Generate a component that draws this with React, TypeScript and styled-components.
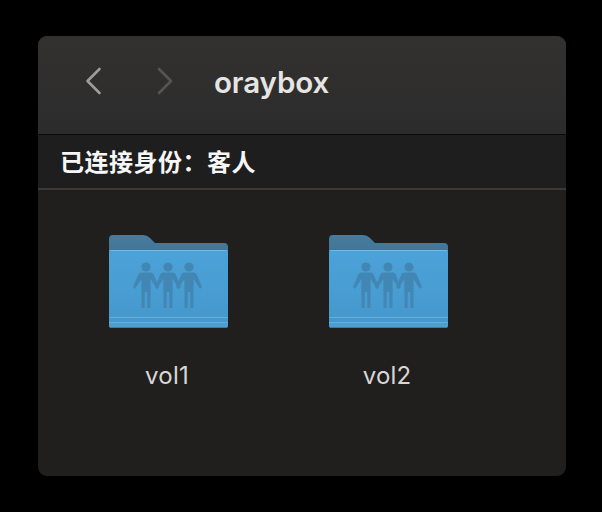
import React from "react";
import styled, { createGlobalStyle } from "styled-components";

const Global = createGlobalStyle`
  html, body { margin: 0; padding: 0; background: #000; }
  body { width: 602px; height: 512px; overflow: hidden; font-family: Inter, "Noto Sans CJK SC", sans-serif; }
`;
const Stage = styled.div`
  width: 602px; height: 512px; padding: 36px 36px 36px 38px; box-sizing: border-box;
`;
const Window = styled.div`
  width: 528px; height: 440px; border-radius: 9px; overflow: hidden;
  background: #211e1e; display: flex; flex-direction: column;
`;
const Toolbar = styled.div`
  height: 99px; flex: none; box-sizing: border-box; background: linear-gradient(#323130, #2d2c2c);
  border-bottom: 1px solid #0b0b0b; display: flex; align-items: center; padding: 0 0 9px 46px;
`;
const NavButton = styled.svg<{ $enabled?: boolean; $gap: number }>`
  width: 20px; height: 30px; flex: none; margin-right: ${p => p.$gap}px; fill: none;
  stroke: ${p => (p.$enabled ? "#9d9c9b" : "#565554")}; stroke-width: 2.6; stroke-linecap: round; stroke-linejoin: round;
`;
const Title = styled.div`
  font-size: 29.5px; font-weight: 600; color: #e6e5e4; letter-spacing: -0.1px; line-height: 32px; margin: 3px 0 0 1px;
`;
const StatusBar = styled.div`
  height: 55px; flex: none; box-sizing: border-box; background: #1f1e1e; border-bottom: 2px solid #3a3938;
  display: flex; align-items: center; padding: 0 0 2px 22px;
  font-family: "Noto Sans CJK SC", sans-serif; font-size: 24px; font-weight: 700; color: #f6f6f6; letter-spacing: 0.5px;
`;
const Grid = styled.div`
  display: grid; grid-template-columns: repeat(2, 220px); padding: 44px 0 0 19px;
`;
const Item = styled.div`
  display: flex; flex-direction: column; align-items: center;
`;
const FolderIcon = styled.svg`
  width: 120px; height: 95px; display: block; margin-right: -4px;
`;
const Label = styled.div`
  margin-top: 32px; font-size: 24px; line-height: 30px; color: #d8d7d6; letter-spacing: 0.2px;
`;

const Person = ({ x }: { x: number }) => (
  <g transform={`translate(${x} 0)`}>
    <circle cx="0" cy="33" r="4.6" />
    <path d="M-5 38.5 H5 L7.2 39.5 L13 53 L11 55 L4.6 45 V56 L4.4 74 H1.4 L1.2 58 H-1.2 L-1.4 74 H-4.4 L-4.6 56 V45 L-11 55 L-13 53 L-7.2 39.5 Z" />
  </g>
);

const Folder = ({ id }: { id: string }) => (
  <FolderIcon viewBox="0 0 120 95">
    <defs>
      <linearGradient id={`${id}b`} x1="0" y1="0" x2="0" y2="1">
        <stop offset="0" stopColor="#467c9f" />
        <stop offset="1" stopColor="#3d7091" />
      </linearGradient>
      <linearGradient id={`${id}f`} x1="0" y1="0" x2="0" y2="1">
        <stop offset="0" stopColor="#4ca3d9" />
        <stop offset="1" stopColor="#4497cb" />
      </linearGradient>
      <clipPath id={`${id}c`}>
        <path d="M0 18 Q0 16 2 16 H117 Q119 16 119 18 V91 Q119 94 116 94 H3 Q0 94 0 91 Z" />
      </clipPath>
    </defs>
    <path d="M0 5 Q0 1 4 1 H34 Q38 1 41 4 L46 9 H115 Q119 9 119 13 V30 H0 Z" fill={`url(#${id}b)`} />
    <g clipPath={`url(#${id}c)`}>
      <rect x="0" y="16" width="119" height="78" fill={`url(#${id}f)`} />
      <rect x="0" y="16" width="119" height="1" fill="#6fb9e4" />
      <rect x="0" y="83" width="119" height="1" fill="#66add8" />
      <rect x="0" y="88" width="119" height="1" fill="#66add8" />
      <rect x="0" y="89" width="119" height="5" fill="#4d9fd0" />
      <rect x="0" y="93" width="119" height="1" fill="#3a7ca6" />
    </g>
    <g fill="#4287b4">
      <Person x={37} />
      <Person x={59} />
      <Person x={80} />
    </g>
  </FolderIcon>
);

export default function App() {
  return (
    <Stage>
      <Global />
      <Window>
        <Toolbar>
          <NavButton $enabled $gap={51} viewBox="0 0 20 30"><path d="M15.5 3 L3.5 15 L15.5 27" /></NavButton>
          <NavButton $gap={38} viewBox="0 0 20 30"><path d="M4 3 L16 15 L4 27" /></NavButton>
          <Title>oraybox</Title>
        </Toolbar>
        <StatusBar>已连接身份：客人</StatusBar>
        <Grid>
          <Item><Folder id="a" /><Label>vol1</Label></Item>
          <Item><Folder id="b" /><Label>vol2</Label></Item>
        </Grid>
      </Window>
    </Stage>
  );
}
